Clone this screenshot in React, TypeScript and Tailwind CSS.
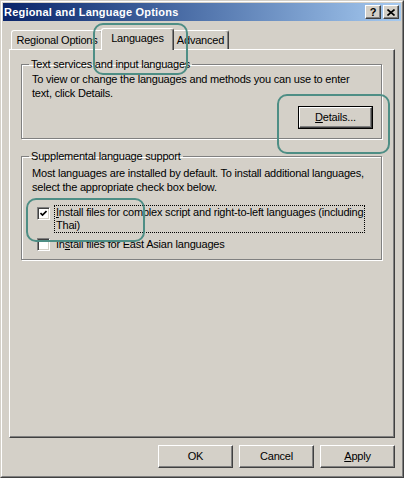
import React from 'react';

const raised =
  'border-t border-l border-r border-b border-t-white border-l-white border-r-[#404040] border-b-[#404040] shadow-[inset_-1px_-1px_0_#808080]';

const CaptionButton: React.FC<{ children: React.ReactNode; className?: string }> = ({ children, className = '' }) => (
  <div className={`w-[16px] h-[14px] bg-[#d4d0c8] flex items-center justify-center ${raised} ${className}`}>
    {children}
  </div>
);

const DialogButton: React.FC<{ children: React.ReactNode }> = ({ children }) => (
  <button className={`w-[75px] h-[23px] bg-[#d4d0c8] flex items-center justify-center leading-none ${raised}`}>
    {children}
  </button>
);

const CheckBox: React.FC<{ checked?: boolean; className?: string }> = ({ checked, className = '' }) => (
  <div
    className={`w-[13px] h-[13px] shrink-0 bg-white flex items-center justify-center border-t border-l border-r border-b border-t-[#808080] border-l-[#808080] border-r-white border-b-white shadow-[inset_1px_1px_0_#404040,inset_-1px_-1px_0_#d4d0c8] ${className}`}
  >
    {checked && (
      <svg width="7" height="7" viewBox="0 0 7 7">
        <path d="M0.5 3 L2.5 5 L6.5 1" fill="none" stroke="#000" strokeWidth="1.6" />
      </svg>
    )}
  </div>
);

export default function App() {
  return (
    <div className="relative w-[404px] h-[478px] bg-[#d4d0c8] text-black text-[11px] tracking-[-0.2px] font-['Liberation_Sans',Arial,sans-serif] select-none">
      <div className="w-full h-full border border-t-[#d4d0c8] border-l-[#d4d0c8] border-r-[#404040] border-b-[#404040]">
        <div className="w-full h-full border border-t-white border-l-white border-r-[#808080] border-b-[#808080] p-px flex flex-col">
          {/* Title bar */}
          <div className="h-[18px] flex items-center bg-linear-to-r from-[#0a246a] to-[#a6caf0] pl-[1px] pr-[2px]">
            <span className="flex-1 text-white font-bold tracking-[0.2px] leading-[18px]">Regional and Language Options</span>
            <CaptionButton>
              <span className="font-bold text-[11px] leading-none">?</span>
            </CaptionButton>
            <CaptionButton className="ml-[2px]">
              <svg width="8" height="7" viewBox="0 0 8 7">
                <path d="M0.5 0.5 L7.5 6.5 M7.5 0.5 L0.5 6.5" fill="none" stroke="#000" strokeWidth="1.6" />
              </svg>
            </CaptionButton>
          </div>

          <div className="px-[6px]">
            {/* Tabs */}
            <div className="flex items-end pl-[2px] mt-[7px]">
              <div className="w-[92px] h-[19px] flex items-center justify-center border-t border-l border-r border-t-white border-l-white border-r-[#404040] shadow-[inset_-1px_0_0_#808080] rounded-t-[3px]">
                Regional Options
              </div>
              <div className="relative z-10 -mx-[2px] -mb-px w-[73px] h-[22px] pb-[2px] bg-[#d4d0c8] flex items-center justify-center border-t border-l border-r border-t-white border-l-white border-r-[#404040] shadow-[inset_-1px_0_0_#808080] rounded-t-[3px]">
                Languages
              </div>
              <div className="w-[57px] h-[19px] flex items-center justify-center border-t border-l border-r border-t-white border-l-white border-r-[#404040] shadow-[inset_-1px_0_0_#808080] rounded-t-[3px]">
                Advanced
              </div>
            </div>

            {/* Tab panel */}
            <div className={`h-[389px] pt-[7px] ${raised}`}>
              <fieldset className="w-[361px] ml-[11px] border border-[#808080] shadow-[inset_1px_1px_0_#fff,1px_1px_0_#fff]">
                <legend className="ml-[7px] px-[2px] leading-[14px]">Text services and input languages</legend>
                <div className="pl-[10px] pt-[1px] leading-[14px] whitespace-nowrap">
                  To view or change the languages and methods you can use to enter
                  <br />
                  text, click Details.
                </div>
                <div className="flex justify-end pr-[8px] mt-[6px] pb-[9px]">
                  <div className="border border-black">
                    <button className={`w-[73px] h-[21px] bg-[#d4d0c8] flex items-center justify-center leading-none ${raised}`}>
                      <span>
                        <span className="underline">D</span>etails...
                      </span>
                    </button>
                  </div>
                </div>
              </fieldset>

              <fieldset className="w-[361px] ml-[11px] mt-[10px] border border-[#808080] shadow-[inset_1px_1px_0_#fff,1px_1px_0_#fff]">
                <legend className="ml-[7px] px-[2px] leading-[14px]">Supplemental language support</legend>
                <div className="pl-[10px] pt-[3px] leading-[14px] whitespace-nowrap">
                  Most languages are installed by default. To install additional languages,
                  <br />
                  select the appropriate check box below.
                </div>
                <div className="flex items-start ml-[15px] mt-[11px]">
                  <CheckBox checked className="mt-[2px]" />
                  <div className="ml-[4px] w-[311px] border border-dotted border-black leading-[13px] pl-px whitespace-nowrap">
                    <span className="underline">I</span>nstall files for complex script and right-to-left languages (including
                    <br />
                    Thai)
                  </div>
                </div>
                <div className="flex items-start ml-[15px] mt-[4px] pb-[7px]">
                  <CheckBox className="mt-[1px]" />
                  <div className="ml-[4px] border border-transparent leading-[13px] pl-px whitespace-nowrap">
                    In<span className="underline">s</span>tall files for East Asian languages
                  </div>
                </div>
              </fieldset>
            </div>

            {/* Dialog buttons */}
            <div className="flex justify-end gap-[6px] mt-[7px]">
              <DialogButton>OK</DialogButton>
              <DialogButton>Cancel</DialogButton>
              <DialogButton>
                <span>
                  <span className="underline">A</span>pply
                </span>
              </DialogButton>
            </div>
          </div>
        </div>
      </div>

      {/* Annotation marks */}
      <div className="absolute left-[93px] top-[23px] w-[95px] h-[52px] border-2 border-[#4e8e85] rounded-[10px] pointer-events-none" />
      <div className="absolute left-[277px] top-[94px] w-[113px] h-[60px] border-2 border-[#4e8e85] rounded-[10px] pointer-events-none" />
      <div className="absolute left-[26px] top-[198px] w-[119px] h-[44px] border-2 border-[#4e8e85] rounded-[10px] pointer-events-none" />
    </div>
  );
}
